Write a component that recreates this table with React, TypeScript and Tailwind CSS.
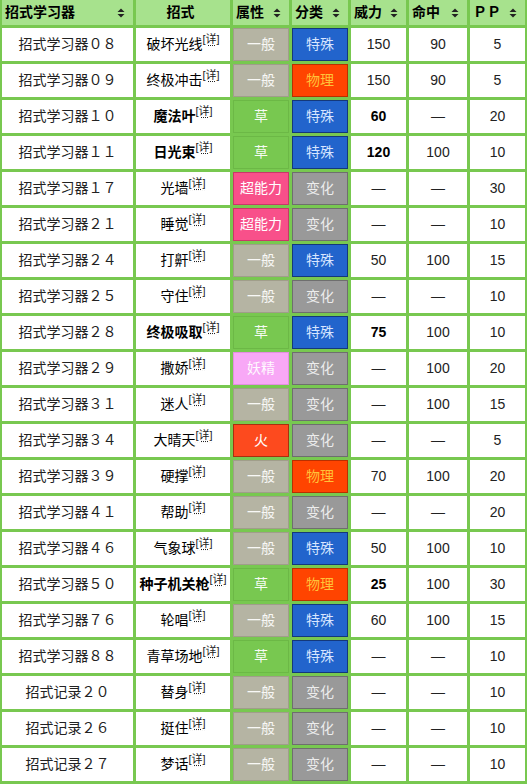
import React from "react"

type Move = {
  no: string
  name: string
  type: string
  cat: string
  power: string
  acc: string
  pp: string
  stab?: boolean
}

const moves: Move[] = [
  { no: "招式学习器０８", name: "破坏光线", type: "一般", cat: "特殊", power: "150", acc: "90", pp: "5" },
  { no: "招式学习器０９", name: "终极冲击", type: "一般", cat: "物理", power: "150", acc: "90", pp: "5" },
  { no: "招式学习器１０", name: "魔法叶", type: "草", cat: "特殊", power: "60", acc: "—", pp: "20", stab: true },
  { no: "招式学习器１１", name: "日光束", type: "草", cat: "特殊", power: "120", acc: "100", pp: "10", stab: true },
  { no: "招式学习器１７", name: "光墙", type: "超能力", cat: "变化", power: "—", acc: "—", pp: "30" },
  { no: "招式学习器２１", name: "睡觉", type: "超能力", cat: "变化", power: "—", acc: "—", pp: "10" },
  { no: "招式学习器２４", name: "打鼾", type: "一般", cat: "特殊", power: "50", acc: "100", pp: "15" },
  { no: "招式学习器２５", name: "守住", type: "一般", cat: "变化", power: "—", acc: "—", pp: "10" },
  { no: "招式学习器２８", name: "终极吸取", type: "草", cat: "特殊", power: "75", acc: "100", pp: "10", stab: true },
  { no: "招式学习器２９", name: "撒娇", type: "妖精", cat: "变化", power: "—", acc: "100", pp: "20" },
  { no: "招式学习器３１", name: "迷人", type: "一般", cat: "变化", power: "—", acc: "100", pp: "15" },
  { no: "招式学习器３４", name: "大晴天", type: "火", cat: "变化", power: "—", acc: "—", pp: "5" },
  { no: "招式学习器３９", name: "硬撑", type: "一般", cat: "物理", power: "70", acc: "100", pp: "20" },
  { no: "招式学习器４１", name: "帮助", type: "一般", cat: "变化", power: "—", acc: "—", pp: "20" },
  { no: "招式学习器４６", name: "气象球", type: "一般", cat: "特殊", power: "50", acc: "100", pp: "10" },
  { no: "招式学习器５０", name: "种子机关枪", type: "草", cat: "物理", power: "25", acc: "100", pp: "30", stab: true },
  { no: "招式学习器７６", name: "轮唱", type: "一般", cat: "特殊", power: "60", acc: "100", pp: "15" },
  { no: "招式学习器８８", name: "青草场地", type: "草", cat: "特殊", power: "—", acc: "—", pp: "10" },
  { no: "招式记录２０", name: "替身", type: "一般", cat: "变化", power: "—", acc: "—", pp: "10" },
  { no: "招式记录２６", name: "挺住", type: "一般", cat: "变化", power: "—", acc: "—", pp: "10" },
  { no: "招式记录２７", name: "梦话", type: "一般", cat: "变化", power: "—", acc: "—", pp: "10" },
]

const typeStyle: Record<string, string> = {
  一般: "bg-[#b5b4a3] border-[#a09e8a] text-white/90",
  草: "bg-[#78c850] border-[#6cb846] text-white/95",
  超能力: "bg-[#f8508a] border-[#c83868] text-white",
  妖精: "bg-[#f8a8f6] border-[#e48ee0] text-white/95",
  火: "bg-[#fd4a1e] border-[#a8300f] text-white",
}

const catStyle: Record<string, string> = {
  特殊: "bg-[#2264cc] border-[#14387a] text-[#d8e6ff]",
  物理: "bg-[#ff4400] border-[#b83000] text-[#ffc23a]",
  变化: "bg-[#999999] border-[#6e6e6e] text-[#ececec]",
}

function SortIcon() {
  return (
    <svg width="8" height="10" viewBox="0 0 8 10" className="shrink-0">
      <path d="M4 0.5 L7.5 4 L0.5 4 Z" fill="#222" />
      <path d="M4 9.5 L7.5 6 L0.5 6 Z" fill="#222" />
    </svg>
  )
}

function Head({ label, sort = true, center = false }: { label: string; sort?: boolean; center?: boolean }) {
  return (
    <div
      className={`flex h-[25px] items-center bg-[#a7e28d] pl-[3px] pr-[8px] font-bold text-black ${
        center ? "justify-center" : "justify-between"
      }`}
    >
      <span>{label}</span>
      {sort && <SortIcon />}
    </div>
  )
}

function Cell({ children, className = "" }: { children: React.ReactNode; className?: string }) {
  return <div className={`flex h-[33px] items-center justify-center bg-white ${className}`}>{children}</div>
}

export default function App() {
  return (
    <div
      className="h-[784px] w-[527px] overflow-hidden bg-white text-[14px] text-[#222]"
      style={{ fontFamily: '"Liberation Sans", "Noto Sans CJK SC", sans-serif' }}
    >
      <div className="grid grid-cols-[131px_94px_56px_56px_55px_58px_55px] gap-[3px] bg-[#78c850] px-[2px] pb-[3px]">
        <Head label="招式学习器" />
        <Head label="招式" sort={false} center />
        <Head label="属性" />
        <Head label="分类" />
        <Head label="威力" />
        <Head label="命中" />
        <Head label="ＰＰ" />

        {moves.map((m) => (
          <React.Fragment key={m.no}>
            <Cell>{m.no}</Cell>
            <Cell className={m.stab ? "font-bold" : ""}>
              <span className="text-black">{m.name}</span>
              <sup className="-top-[5px] text-[11px] font-normal leading-none text-[#222] underline decoration-dotted underline-offset-2">
                [详]
              </sup>
            </Cell>
            <div className={`flex h-[33px] items-center justify-center border ${typeStyle[m.type]}`}>{m.type}</div>
            <div className={`flex h-[33px] items-center justify-center border ${catStyle[m.cat]}`}>{m.cat}</div>
            <Cell className={m.stab ? "font-bold text-black" : ""}>{m.power}</Cell>
            <Cell>{m.acc}</Cell>
            <Cell>{m.pp}</Cell>
          </React.Fragment>
        ))}
      </div>
    </div>
  )
}
